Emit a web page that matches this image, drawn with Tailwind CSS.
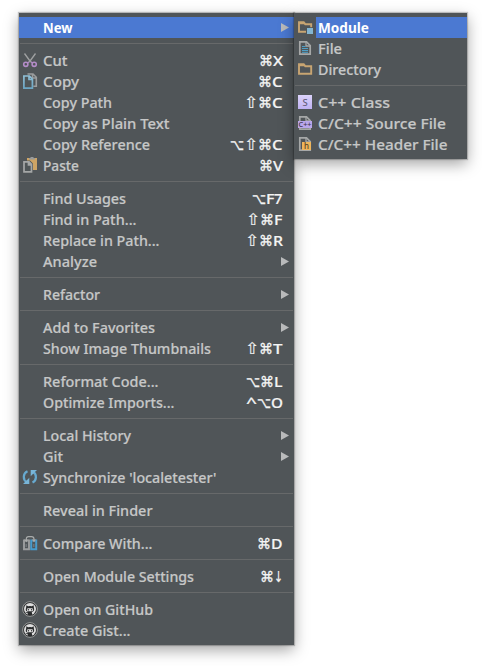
<!DOCTYPE html>
<html lang="en">
<head>
<meta charset="utf-8">
<title>Context menu</title>
<script src="https://cdn.jsdelivr.net/npm/@tailwindcss/browser@4"></script>
</head>
<body class="bg-white w-[482px] h-[666px] overflow-hidden">
<svg class="absolute size-0">
  <defs>
    <linearGradient id="lilac" x1="0" y1="0" x2="0" y2="1"><stop offset="0" stop-color="#dcd3fb"/><stop offset="1" stop-color="#bfb2f2"/></linearGradient>
    <linearGradient id="blue" x1="0" y1="0" x2="0" y2="1"><stop offset="0" stop-color="#8fbfd6"/><stop offset="1" stop-color="#6ca6c4"/></linearGradient>
  </defs>
  <symbol id="cut" viewBox="0 0 16 16"><path d="M2.500 1.500 8.700 10M13.500 1.500 7.300 10M7 9.500h2" stroke="#9fa1a2" stroke-width="1.300" fill="none"/><circle cx="3.800" cy="12.300" r="2.100" fill="none" stroke="#b48cc8" stroke-width="1.600"/><circle cx="12.200" cy="12.300" r="2.100" fill="none" stroke="#b48cc8" stroke-width="1.600"/><path d="M5.500 11 7 9.800M10.500 11 9 9.800" stroke="#b48cc8" stroke-width="1.400"/></symbol>
  <symbol id="copy" viewBox="0 0 16 16"><path d="M5.500 1h5.500l3.300 3.300v9h-3M10.500 1v4h4" fill="none" stroke="#9b9d9e" stroke-width="1.600"/><path d="M1.900 3h5.500l3 3v9.100H1.900zM7 3v3.500h3.500" fill="#4f5557" stroke="url(#blue)" stroke-width="1.700"/></symbol>
  <symbol id="paste" viewBox="0 0 16 16"><path d="M5 1h10v12H5z" fill="#cda465"/><path d="M7 1h1.500V0h3v1H13v1.500H7z" fill="#989a9a"/><path d="M.500 3.500h7.500l3 3V16H.500z" fill="#4f5557"/><path d="M2 4.800h5L9.500 7.300v7.500H2zM6.500 4.800v3h3" fill="#4f5557" stroke="#a5a7a7" stroke-width="1.700"/></symbol>
  <symbol id="sync" viewBox="0 0 16 16"><path d="M5.500 2.200A6.200 6.200 0 0 0 5 13.300M10.500 13.600A6.200 6.200 0 0 0 11 2.800" fill="none" stroke="#67a9cf" stroke-width="2.200"/><path d="M8.700 1H15L8.700 7.300zM7.300 15H1L7.300 8.700z" fill="#78b5d8"/></symbol>
  <symbol id="compare" viewBox="0 0 16 16"><path d="M2 5.500v8.700h5V5.500z" fill="none" stroke="#9b9d9e" stroke-width="1.900"/><path d="M9.200 5.500v8.700h5V5.500z" fill="none" stroke="#489bcc" stroke-width="2"/><path d="M4.300 6V4Q4.300 1.500 7 1.500h2.500Q12 1.500 12 4v2" fill="none" stroke="#4f5557" stroke-width="2.600"/><path d="M4.300 5.500V4Q4.300 1.700 6.500 1.700h3Q12 1.700 12 4v1.500" fill="none" stroke="#aaacac" stroke-width="1.200"/><path d="M2 4.500h4.600L4.300 7.300zM9.700 4.500h4.600L12 7.300z" fill="#aaacac"/><path d="M4.200 9v3M11.800 9v3" stroke="#747a7d" stroke-width="1.300"/></symbol>
  <symbol id="github" viewBox="0 0 16 16"><circle cx="8" cy="8" r="7.400" fill="#303233" stroke="#969898" stroke-width="1"/><circle cx="8" cy="8" r="6" fill="#dedede"/><path d="M4.300 4.200 6.200 5.200q1.800-.4 3.600 0l1.900-1 .2 2.600q1.200 3.400-2.200 4.200.5.700.4 3H5.900l-.1-1.700q-1.500.2-2.300-1.300 1 .6 2.300.1l.2-.3Q2.800 10.300 4.100 6.800z" fill="#292b2c"/><rect x="4.900" y="7.300" width="6.200" height="2.900" rx="1.300" fill="#dedede"/><circle cx="6.400" cy="8.800" r=".7" fill="#333"/><circle cx="9.600" cy="8.800" r=".7" fill="#333"/></symbol>
  <symbol id="folder" viewBox="0 0 16 16"><path d="M2 3.200h4.700l1.600 2h5.900v7.600H2z" fill="none" stroke="#c8a572" stroke-width="1.900"/><path d="M2 3h4.800l1 2.200H2z" fill="#c8a572"/></symbol>
  <symbol id="module" viewBox="0 0 16 16"><use href="#folder"/><path d="M9 8.200h7v7H9z" fill="#4f5557"/><path d="M10 9h6v6h-6z" fill="#83b5d1"/></symbol>
  <symbol id="page" viewBox="0 0 16 16"><path d="M2.800 1.800h6.700l3.700 3.700v8.700H2.800z" fill="none" stroke="#a6a8a8" stroke-width="1.700"/><path d="M9 1.500v4.500h4.500" fill="none" stroke="#a6a8a8" stroke-width="1.300"/></symbol>
  <symbol id="file" viewBox="0 0 16 16"><use href="#page"/><path d="M5 6.500h3.500M5 8.500h6M5 10.500h6M5 12.300h6" stroke="#4f9fc7" stroke-width="1"/></symbol>
  <symbol id="class" viewBox="0 0 16 16"><path d="M1 1h14v14H1z" fill="url(#lilac)"/><text x="8" y="11.500" text-anchor="middle" font-family="Noto Sans" font-size="9.500" fill="#665e7c">S</text></symbol>
  <symbol id="cpp" viewBox="0 0 16 16"><use href="#page"/><path d="M1 6h14v7H1z" fill="#baa6ea"/><text x="1.500" y="12.200" textLength="13" lengthAdjust="spacingAndGlyphs" font-family="Noto Sans" font-weight="500" font-size="7.500" fill="#42384f">C++</text></symbol>
  <symbol id="header" viewBox="0 0 16 16"><use href="#page"/><path d="M5 6h9v8H5z" fill="#edb55c"/><text x="9.500" y="13" text-anchor="middle" font-family="Noto Sans" font-weight="500" font-size="8" fill="#574327">h</text></symbol>
</svg>
<main class="flex items-start pl-[19px] pt-[13px] text-[15px] leading-[21px] text-[#c6c7c7] font-medium font-['Noto_Sans','DejaVu_Sans',sans-serif]">
  <nav id="main-menu" class="w-[275px] h-[632px] shrink-0 py-1 bg-[#505558] shadow-[0_0_1px_1px_rgba(0,0,0,0.22),0_5px_14px_rgba(0,0,0,0.36)]"></nav>
  <nav id="submenu" class="relative w-[173px] h-[146px] shrink-0 py-1 bg-[#505558] shadow-[0_0_1px_1px_rgba(0,0,0,0.2),0_5px_14px_rgba(0,0,0,0.36)]"></nav>
</main>
<script>
  // Rows: [label, label width, icon, shortcut or '>' for a submenu]; null draws a separator.
  const mainRows = [
    ['New', 29, '', '>', 1], null,
    ['Cut', 24, 'cut', '⌘X'], ['Copy', 35.5, 'copy', '⌘C'], ['Copy Path', 68.5, '', '⇧⌘C'],
    ['Copy as Plain Text', 126, '', ''], ['Copy Reference', 106.5, '', '⌥⇧⌘C'], ['Paste', 35.5, 'paste', '⌘V'], null,
    ['Find Usages', 82.5, '', '⌥F7'], ['Find in Path...', 93, '', '⇧⌘F'], ['Replace in Path...', 116, '', '⇧⌘R'], ['Analyze', 53.5, '', '>'], null,
    ['Refactor', 56.5, '', '>'], null,
    ['Add to Favorites', 111.5, '', '>'], ['Show Image Thumbnails', 167.5, '', '⇧⌘T'], null,
    ['Reformat Code...', 115, '', '⌥⌘L'], ['Optimize Imports...', 131, '', '^⌥O'], null,
    ['Local History', 87.5, '', '>'], ['Git', 19.5, '', '>'], ["Synchronize 'localetester'", 173, 'sync', ''], null,
    ['Reveal in Finder', 109, '', ''], null,
    ['Compare With...', 109, 'compare', '⌘D'], null,
    ['Open Module Settings', 150.5, '', '⌘↓'], null,
    ['Open on GitHub', 109.5, 'github', ''], ['Create Gist...', 87, 'github', '']
  ];
  const subRows = [
    ['Module', 50.5, 'module', '', 1], ['File', 23.5, 'file', ''], ['Directory', 62.5, 'folder', ''], null,
    ['C++ Class', 71.5, 'class', ''], ['C/C++ Source File', 127.5, 'cpp', ''], ['C/C++ Header File', 129, 'header', '']
  ];
  const text = (s, width, cls) => `<svg class="h-[21px] shrink-0 overflow-visible ${cls}" style="width:${width}px"><text x="0" y="16" textLength="${width}" lengthAdjust="spacingAndGlyphs" fill="currentColor">${s}</text></svg>`;
  const letterWidth = { X: 10, C: 10.5, V: 10, F: 8.5, 7: 8.5, R: 10, T: 9.5, L: 8.5, O: 12, D: 11.5, '↓': 9, '^': 11 };
  const keys = s => [...s].map(c => letterWidth[c]
    ? text(c, letterWidth[c], '[stroke:currentColor] [stroke-width:0.2px]')
    : text(c, 14, c === '⇧' ? "font-normal font-['DejaVu_Sans'] text-[16px] [stroke:currentColor] [stroke-width:0.15px]" : "font-normal font-['DejaVu_Sans'] [stroke:currentColor] [stroke-width:0.3px]")).join('');
  const row = (r, sub) => {
    if (!r) return '<div class="h-3 px-px pt-[5px]"><div class="h-px bg-[#67696a]"></div></div>';
    const [label, width, icon, extra, active] = r;
    const tint = active ? 'text-white font-bold' : '';
    const end = extra === '>'
      ? '<svg class="ml-auto mr-[5px] w-2 h-[9px]" viewBox="0 0 8 9"><path d="M0 0 8 4.500 0 9z" fill="#b9babb"/></svg>'
      : `<span class="ml-auto mr-[11.5px] flex text-[#f4f4f4]">${keys(extra)}</span>`;
    return `<div class="flex h-[21px] items-center whitespace-nowrap ${tint} ${active && !sub ? 'bg-[#4b79d2]' : ''}">
      <span class="shrink-0 h-[21px] pl-[3px] pt-0.5 ${sub ? 'w-[22px]' : 'w-6'}">${icon ? `<svg class="size-4"><use href="#${icon}"/></svg>` : ''}</span>
      <span class="flex flex-1 h-[21px] items-center ${sub ? 'pl-0.5' : ''} ${active ? 'bg-[#4b79d2]' : ''}">${text(label, width + 0.5, active ? '' : '[stroke:currentColor] [stroke-width:0.2px]')}${end}</span></div>`;
  };
  document.getElementById('main-menu').innerHTML = mainRows.map(r => row(r, false)).join('');
  document.getElementById('submenu').innerHTML = subRows.map(r => row(r, true)).join('');
</script>
</body>
</html>
